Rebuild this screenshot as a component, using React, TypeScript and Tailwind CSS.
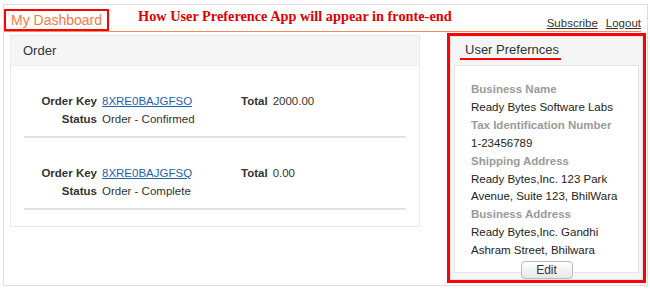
import React from "react";

const sans = "font-['Liberation_Sans',Arial,sans-serif]";

function OrderRow({ k, total, status }: { k: string; total: string; status: string }) {
  return (
    <div className="pt-[27px] pb-[8px] border-b-2 border-[#e2e2e2]">
      <div className="grid grid-cols-[73px_134px_auto_1fr] gap-x-[5px] text-[11.5px] leading-[17.5px] text-[#333]">
        <div className="text-right font-bold">Order Key</div>
        <div>
          <a href="#" className="text-[#2262ad] underline">{k}</a>
        </div>
        <div className="font-bold">Total</div>
        <div>{total}</div>
        <div className="text-right font-bold">Status</div>
        <div className="col-span-3">{status}</div>
      </div>
    </div>
  );
}

function Pref({ label, lines }: { label: string; lines: string[] }) {
  return (
    <>
      <div className="font-bold text-[#9a9a9a]">{label}</div>
      {lines.map((l) => (
        <div key={l} className="text-[#222]">{l}</div>
      ))}
    </>
  );
}

export default function App() {
  return (
    <div className={`${sans} bg-white w-[650px] h-[289px] pl-[3px] pt-[4px]`}>
      <div className="w-[645px] h-[282px] border border-[#dedede] flex flex-col">
        {/* header */}
        <div className="flex items-start mr-[6px] border-b border-[#f08a60] h-[27px]">
          <div className="mt-[4px] border-2 border-[#ff0000] px-[5px] text-[14px] leading-[18px] text-[#f47a45]">
            My Dashboard
          </div>
          <div className="ml-[29px] mt-[3px] font-['Liberation_Serif',serif] font-bold text-[14.3px] leading-[16px] text-[#e00000]">
            How User Preference App will appear in fronte-end
          </div>
          <div className="ml-auto mt-[11px] flex gap-[8px] text-[11.5px] leading-[14px] text-[#333]">
            <a href="#" className="underline">Subscribe</a>
            <a href="#" className="underline">Logout</a>
          </div>
        </div>

        {/* content */}
        <div className="flex items-start">
          <div className="ml-[6px] mt-[3px] w-[410px] border border-[#ebebeb] bg-white">
            <div className="h-[30px] bg-[#f5f5f5] border-b border-[#ebebeb] pl-[12px] text-[13px] leading-[30px] text-[#333]">
              Order
            </div>
            <div className="px-[13px] pb-[16px]">
              <OrderRow k="8XRE0BAJGFSO" total="2000.00" status="Order - Confirmed" />
              <OrderRow k="8XRE0BAJGFSQ" total="0.00" status="Order - Complete" />
            </div>
          </div>

          <div className="ml-[27px] mt-[1px] w-[199px] border-[3px] border-[#ff0000]">
            <div className="bg-[#f5f5f5] border border-[#e6e6e6] px-[3px] pb-[6px]">
              <div className="h-[28px]">
                <span className="inline-block ml-[6px] mt-[4px] pl-[5px] pr-[2px] border-b-2 border-[#ff0000] text-[13px] leading-[16px] text-[#333]">
                  User Prefernces
                </span>
              </div>
              <div className="bg-white border border-[#e3e3e3] pl-[16px] pt-[15px] text-[11.5px] leading-[17.9px]">
                <Pref label="Business Name" lines={["Ready Bytes Software Labs"]} />
                <Pref label="Tax Identification Number" lines={["1-23456789"]} />
                <Pref label="Shipping Address" lines={["Ready Bytes,Inc. 123 Park", "Avenue, Suite 123, BhilWara"]} />
                <Pref label="Business Address" lines={["Ready Bytes,Inc. Gandhi", "Ashram Street, Bhilwara"]} />
                <div className="flex justify-center pr-[16px] mt-[1px] -mb-[7px]">
                  <button className="relative w-[52px] h-[18px] rounded-[4px] border border-[#bdbdbd] bg-gradient-to-b from-[#ffffff] to-[#e6e6e6] text-[12px] leading-[16px] text-[#333]">
                    Edit
                  </button>
                </div>
              </div>
            </div>
          </div>
        </div>
      </div>
    </div>
  );
}
